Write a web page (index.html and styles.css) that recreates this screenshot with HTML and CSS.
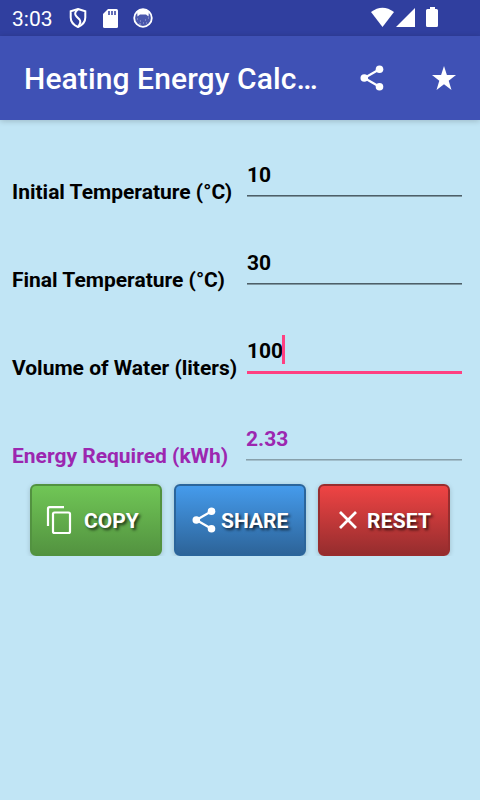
FILE: index.html
```html
<!DOCTYPE html>
<html lang="en">
<head>
    <meta charset="utf-8">
    <title>Heating Energy Calculator</title>
    <link rel="stylesheet" href="styles.css">
</head>
<body>
    <div class="status-bar">
        <span class="clock">3:03</span>
        <svg class="shield" width="18" height="20" viewBox="0 0 18 20">
            <path d="M9 1L16.300 3.200V9.500C16.300 14 13.500 17 9 19C4.500 17 1.700 14 1.700 9.500V3.200Z" fill="none" stroke="#fff" stroke-width="2"/>
            <path d="M9 1.500C5.500 4 5.500 6.500 7.500 8.500L10.500 11.500C12 13.500 11.500 15.500 9.500 18" fill="none" stroke="#fff" stroke-width="2"/>
        </svg>
        <svg class="sd-card" width="15" height="19" viewBox="0 0 15 19">
            <path d="M5 0H13.500Q15 0 15 1.500V17.500Q15 19 13.500 19H1.500Q0 19 0 17.500V5Z" fill="#fff"/>
            <path d="M6 2V6M9 2V6M12 2V6" stroke="#303f9f" stroke-width="1.500"/>
        </svg>
        <svg class="face" width="20" height="20" viewBox="0 0 20 20">
            <circle cx="10" cy="10" r="8.800" fill="#4a57ac" stroke="#fff" stroke-width="1.800"/>
            <path d="M4 3Q10 0 16 3L15.500 8.500L13 6.500H7L4.500 8.500Z" fill="#fff"/>
            <path d="M4 11H5M7 13H8M12 12H13M15 10H16M6 16H8M10 15H11M13 15H14" stroke="#a0a8d8" stroke-width="1"/>
        </svg>
        <svg class="system" width="68" height="20" viewBox="0 0 68 20" fill="#fff">
            <path d="M0 5Q11.500 -3.500 23 5L11.500 20Z"/>
            <path d="M25 20H44V1Z"/>
            <path d="M56 2H59V0H64V2H65.500Q67 2 67 3.500V18.500Q67 20 65.500 20H56.500Q55 20 55 18.500V3.500Q55 2 56.500 2Z"/>
        </svg>
    </div>

    <div class="app-bar">
        <h1>Heating Energy Calc…</h1>
        <svg class="share-icon" width="24" height="26" viewBox="0 0 24 26">
            <path d="M19.500 4.200L4.300 13L19.500 21.800" fill="none" stroke="#fff" stroke-width="2.200"/>
            <g fill="#fff"><circle cx="19.500" cy="4.200" r="3.800"/><circle cx="4.300" cy="13" r="3.800"/><circle cx="19.500" cy="21.800" r="3.800"/></g>
        </svg>
        <svg class="star-icon" width="24" height="24" viewBox="0 0 24 24">
            <path d="M12 0L14.900 9.100H24L16.700 14.700L19.500 24L12 18.200L4.500 24L7.300 14.700L0 9.100H9.100Z" fill="#fff"/>
        </svg>
    </div>

    <div class="content">
        <div class="row">
            <div class="label">Initial Temperature (°C)</div>
            <div class="field">10</div>
        </div>
        <div class="row">
            <div class="label">Final Temperature (°C)</div>
            <div class="field">30</div>
        </div>
        <div class="row">
            <div class="label">Volume of Water (liters)</div>
            <div class="field active">100<span class="caret"></span></div>
        </div>
        <div class="row energy">
            <div class="label">Energy Required (kWh)</div>
            <div class="field result">2.33</div>
        </div>

        <div class="buttons">
            <button type="button" class="copy">
                <svg width="26" height="30" viewBox="0 0 26 30" fill="none" stroke="#fff" stroke-width="2.200">
                    <path d="M18 2.200H3.500Q2 2.200 2 3.700V21"/>
                    <rect x="7" y="7.500" width="17" height="20.500" rx="1.500"/>
                </svg>
                <span>COPY</span>
            </button>
            <button type="button" class="share">
                <svg width="24" height="26" viewBox="0 0 24 26">
                    <path d="M19.500 4.200L4.300 13L19.500 21.800" fill="none" stroke="#fff" stroke-width="2.200"/>
                    <g fill="#fff"><circle cx="19.500" cy="4.200" r="3.800"/><circle cx="4.300" cy="13" r="3.800"/><circle cx="19.500" cy="21.800" r="3.800"/></g>
                </svg>
                <span>SHARE</span>
            </button>
            <button type="button" class="reset">
                <svg width="18" height="18" viewBox="0 0 18 18">
                    <path d="M1 1L17 17M17 1L1 17" stroke="#fff" stroke-width="2.700"/>
                </svg>
                <span>RESET</span>
            </button>
        </div>
    </div>
</body>
</html>
```

FILE: styles.css
```css
* {
    box-sizing: border-box;
}
body {
    margin: 0;
    height: 800px;
    overflow: hidden;
    background: #c1e5f5;
    font-family: Roboto, sans-serif;
    color: #000;
}
svg {
    display: block;
    flex: none;
}
.status-bar {
    display: flex;
    align-items: center;
    height: 36px;
    padding: 0 41px 0 12px;
    background: #303f9f;
}
.clock {
    width: 57px;
    padding-top: 2px;
    color: #fff;
    font-size: 21px;
}
.sd-card {
    margin-left: 16px;
}
.face {
    margin-left: 15px;
}
.system {
    margin: -2px 0 0 auto;
}
.app-bar {
    display: flex;
    align-items: center;
    height: 84px;
    padding: 0 24px;
    background: #3f51b5;
    box-shadow: 0 1px 6px rgba(0, 0, 0, 0.2);
}
h1 {
    width: 300px;
    margin: 0;
    white-space: nowrap;
    color: #fff;
    font-size: 30px;
    font-weight: 500;
    letter-spacing: 0.1px;
}
.share-icon {
    margin-left: 36px;
}
.star-icon {
    margin-left: 48px;
}
.row {
    display: grid;
    grid-template-columns: 235px 215px;
    align-items: end;
    height: 88px;
    padding-left: 12px;
    font-size: 21px;
    font-weight: 700;
    line-height: 24px;
}
.label {
    padding-bottom: 4px;
    white-space: nowrap;
}
.field {
    display: flex;
    height: 33px;
    margin-bottom: 12px;
    border-bottom: 1px solid #4d5f68;
    box-shadow: 0 1px #8098a2;
}
.active {
    height: 35px;
    margin-bottom: 10px;
    border-bottom: 3px solid #ff4081;
    box-shadow: none;
}
.caret {
    width: 3px;
    height: 29px;
    margin: -4px 0 0 -1px;
    background: #ff4081;
}
.energy {
    color: #9c27b0;
}
.result {
    margin-left: -1px;
    border-color: #87a0ab;
    box-shadow: 0 1px #a2bfcc;
}
.buttons {
    display: flex;
    gap: 12px;
    margin: 12px 30px 0;
}
button {
    display: flex;
    align-items: center;
    width: 132px;
    height: 72px;
    padding: 0;
    border: 2px solid;
    border-radius: 6px;
    box-shadow: 0 1px 5px rgba(0, 0, 0, 0.18);
    clip-path: inset(-6px -6px 0 -6px);
    color: #fff;
    font-family: Roboto, sans-serif;
    font-size: 21px;
    font-weight: 700;
    text-shadow: 2px 2px 3px rgba(0, 0, 0, 0.7);
}
button span {
    padding-top: 2px;
}
.copy {
    gap: 12px;
    padding-left: 14px;
    border-color: #529240;
    background: linear-gradient(#70c656, #539340);
}
.share {
    gap: 5px;
    padding-left: 16px;
    border-color: #2b659b;
    background: linear-gradient(#459bec, #2d6499);
}
.reset {
    gap: 10px;
    padding-left: 19px;
    border-color: #982d2e;
    background: linear-gradient(#ef4444, #962d2e);
    letter-spacing: 0.2px;
}
```
